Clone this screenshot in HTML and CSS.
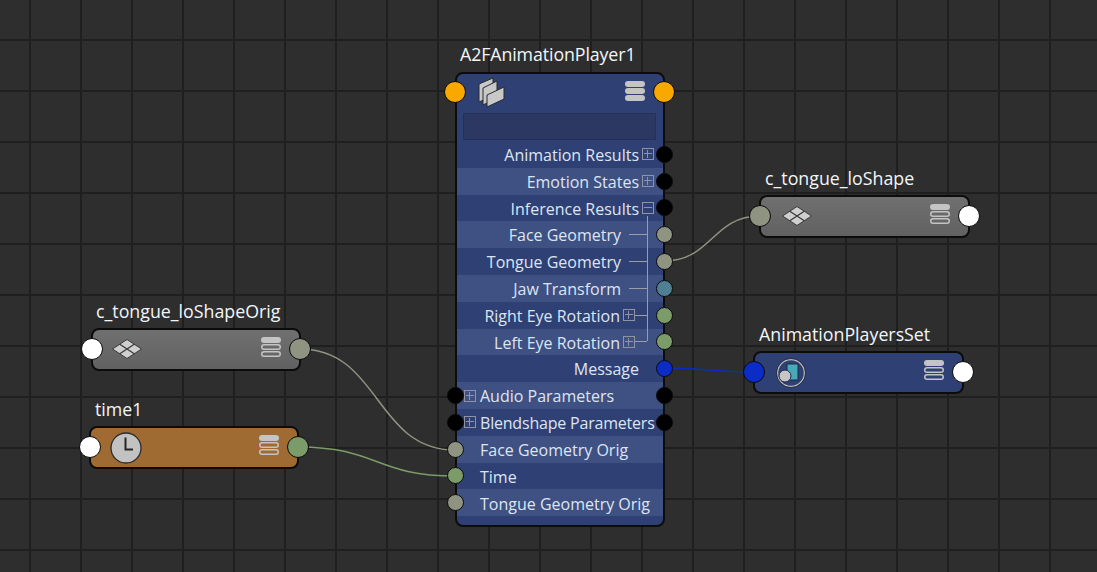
FILE: index.html
```html
<!DOCTYPE html>
<html lang="en">
<head>
<meta charset="utf-8">
<title>Node Editor</title>
<link rel="stylesheet" href="styles.css">
</head>
<body>
<svg class="defs" width="0" height="0" aria-hidden="true">
  <symbol id="stack-open" viewBox="0 0 20 20">
    <rect x="0" y="0" width="20" height="6" rx="3" fill="#c4c4c4"/>
    <rect x="0.75" y="7.75" width="18.5" height="4.5" rx="2.25" fill="none" stroke="#c4c4c4" stroke-width="1.5"/>
    <rect x="0.75" y="14.75" width="18.5" height="4.5" rx="2.25" fill="none" stroke="#c4c4c4" stroke-width="1.5"/>
  </symbol>
  <symbol id="stack-full" viewBox="0 0 20 20">
    <rect x="0" y="0" width="20" height="6" rx="3" fill="#c4c4c4"/>
    <rect x="0" y="7" width="20" height="6" rx="3" fill="#c4c4c4"/>
    <rect x="0" y="14" width="20" height="6" rx="3" fill="#c4c4c4"/>
  </symbol>
  <symbol id="mesh" viewBox="0 0 30 20">
    <path d="M15 0.500 29.500 10 15 19.500 0.500 10Z" fill="#cfcfcf" stroke="#3a3a3a" stroke-width="1"/>
    <path d="M7.750 5.250 22.250 14.750M22.250 5.250 7.750 14.750" fill="none" stroke="#3a3a3a" stroke-width="1.300"/>
  </symbol>
</svg>

<main class="canvas">
  <svg class="wires" width="1097" height="572" viewBox="0 0 1097 572" aria-hidden="true">
    <path class="wire wire-gray" d="M664 261C712 261 712 216 760 216"/>
    <path class="wire wire-gray" d="M300 349C380 349 375 450 455 450"/>
    <path class="wire wire-green" d="M298 447C378 447 375 476 455 476"/>
    <path class="wire wire-blue" d="M664 368C710 368 708 372 754 372"/>
  </svg>

  <section class="node node-orig">
    <h2 class="label">c_tongue_loShapeOrig</h2>
    <div class="pill pill-gray">
      <span class="port big white in"></span>
      <svg class="icon-mesh"><use href="#mesh"/></svg>
      <svg class="icon-stack"><use href="#stack-open"/></svg>
      <span class="port big gray out"></span>
    </div>
  </section>

  <section class="node node-time">
    <h2 class="label">time1</h2>
    <div class="pill pill-brown">
      <span class="port big white in"></span>
      <svg class="icon-clock" viewBox="0 0 32 32">
        <circle cx="16" cy="16" r="15" fill="#c2c2c2" stroke="#2b2b2b" stroke-width="1.300"/>
        <path d="M15.500 5.500V17.500H23" fill="none" stroke="#262626" stroke-width="2"/>
      </svg>
      <svg class="icon-stack"><use href="#stack-open"/></svg>
      <span class="port big green out"></span>
    </div>
  </section>

  <section class="node node-shape">
    <h2 class="label">c_tongue_loShape</h2>
    <div class="pill pill-gray">
      <span class="port big gray in"></span>
      <svg class="icon-mesh"><use href="#mesh"/></svg>
      <svg class="icon-stack"><use href="#stack-open"/></svg>
      <span class="port big white out"></span>
    </div>
  </section>

  <section class="node node-set">
    <h2 class="label">AnimationPlayersSet</h2>
    <div class="pill pill-blue">
      <span class="port big blue in"></span>
      <svg class="icon-set" viewBox="0 0 30 30">
        <circle cx="15" cy="15" r="13.500" fill="#2f4074" stroke="#b9b9b9" stroke-width="1.500"/>
        <circle cx="15" cy="15" r="14.500" fill="none" stroke="#1c1c1c" stroke-width="0.700"/>
        <rect x="11" y="6" width="11" height="16" fill="#47aab8" stroke="#1d2a4a" stroke-width="1"/>
        <circle cx="9" cy="18" r="6" fill="#c6c6c6" stroke="#1d2a4a" stroke-width="1"/>
      </svg>
      <svg class="icon-stack"><use href="#stack-open"/></svg>
      <span class="port big white out"></span>
    </div>
  </section>

  <section class="node node-main">
    <h2 class="label">A2FAnimationPlayer1</h2>
    <div class="player">
      <header class="player-head">
        <span class="port big orange in"></span>
        <svg class="icon-folders" viewBox="0 0 28 32">
          <path d="M1 7 15 1V19L1 25Z" fill="#c8c8c8" stroke="#2a2a2a"/>
          <path d="M5 11 19 4V21L5 28Z" fill="#c8c8c8" stroke="#2a2a2a"/>
          <path d="M9 18 26 10V22L9 30Z" fill="#c8c8c8" stroke="#2a2a2a"/>
        </svg>
        <svg class="icon-stack-main"><use href="#stack-full"/></svg>
        <span class="port big orange out"></span>
        <div class="field"></div>
      </header>
      <div class="rows">
        <span class="tree-line"></span>
        <div class="row end"><span>Animation Results</span><i class="box plus"></i><b class="port black out"></b></div>
        <div class="row end alt"><span>Emotion States</span><i class="box plus"></i><b class="port black out"></b></div>
        <div class="row end"><span>Inference Results</span><i class="box minus"></i><b class="port black out"></b></div>
        <div class="row end child alt lift"><span>Face Geometry</span><i class="tick"></i><b class="port gray out"></b></div>
        <div class="row end child lift"><span>Tongue Geometry</span><i class="tick"></i><b class="port gray out"></b></div>
        <div class="row end child alt"><span>Jaw Transform</span><i class="tick"></i><b class="port teal out"></b></div>
        <div class="row end child"><span>Right Eye Rotation</span><i class="box plus"></i><i class="tick short"></i><b class="port green out"></b></div>
        <div class="row end child alt"><span>Left Eye Rotation</span><i class="box plus"></i><i class="tick short"></i><b class="port green out"></b></div>
        <div class="row end plain lift"><span>Message</span><b class="port blue out"></b></div>
        <div class="row start alt lift"><b class="port black in"></b><i class="box plus"></i><span>Audio Parameters</span><b class="port black out"></b></div>
        <div class="row start"><b class="port black in"></b><i class="box plus"></i><span class="tight">Blendshape Parameters</span><b class="port black out"></b></div>
        <div class="row start flat alt"><b class="port gray in"></b><span>Face Geometry Orig</span></div>
        <div class="row start flat"><b class="port green in"></b><span>Time</span></div>
        <div class="row start flat alt"><b class="port gray in"></b><span>Tongue Geometry Orig</span></div>
      </div>
    </div>
  </section>
</main>
</body>
</html>
```
FILE: styles.css
```css
* { box-sizing: border-box; }
html, body { margin: 0; padding: 0; }
body { width: 1097px; height: 572px; overflow: hidden; background: #2e2e2e; }
.defs { position: absolute; }

.canvas {
  position: relative;
  width: 1097px;
  height: 572px;
  overflow: hidden;
  font-family: "Open Sans", "Noto Sans", sans-serif;
  background-color: #2e2e2e;
  background-image:
    linear-gradient(90deg, #1f1f1f 2px, transparent 2px),
    linear-gradient(#1f1f1f 2px, transparent 2px);
  background-size: 51px 51px, 51px 51px;
  background-position: 29px 0, 0 39px;
}

.wires { position: absolute; left: 0; top: 0; }
.wire { fill: none; stroke-width: 1.500; }
.wire-gray { stroke: #8f9382; }
.wire-green { stroke: #7b9c68; }
.wire-blue { stroke: #0c2cc0; }

.node { position: absolute; }
.node-main { left: 455px; top: 41px; width: 210px; }
.node-orig { left: 91px; top: 297px; width: 210px; }
.node-time { left: 89px; top: 395px; width: 210px; }
.node-shape { left: 759px; top: 164px; width: 211px; }
.node-set { left: 753px; top: 320px; width: 211px; }

.label {
  margin: 0 0 0 5px;
  height: 31px;
  font-size: 17.800px;
  font-weight: 400;
  line-height: 29px;
  color: #f2f6fa;
  white-space: nowrap;
}
.node-main .label { line-height: 27px; letter-spacing: -0.100px; }
.node-time .label,
.node-shape .label,
.node-set .label { margin-left: 6px; }

.pill {
  position: relative;
  display: flex;
  align-items: center;
  justify-content: space-between;
  height: 43px;
  padding: 0 18px 0 21px;
  border: 2px solid #0c0c0c;
  border-radius: 8px;
}
.pill-gray { background: linear-gradient(#707070, #616161); }
.pill-brown { background: #a06b33; padding-left: 19px; }
.pill-blue { background: #2f4074; padding-left: 21px; }
.node-orig .pill { padding-left: 19px; }

.icon-mesh { width: 30px; height: 20px; margin-bottom: 2px; }
.icon-stack { width: 20px; height: 20px; margin-bottom: 6px; }
.icon-clock { width: 32px; height: 32px; }
.icon-set { width: 30px; height: 30px; }

.port {
  position: absolute;
  top: 50%;
  display: block;
  width: 17px;
  height: 17px;
  margin-top: -8.500px;
  border: 1.500px solid #0a0a0a;
  border-radius: 50%;
}
.port.big { width: 22px; height: 22px; margin-top: -12px; }
.pill .port.in { left: -12.500px; }
.pill .port.out { right: -12px; }
.white { background: #ffffff; }
.gray { background: #8f9382; }
.green { background: #7b9c68; }
.teal { background: #4f7f93; }
.blue { background: #0c2cc8; }
.orange { background: #f9a800; }
.black { background: #000000; }

.player {
  height: 455px;
  background: #2f4074;
  border: 2px solid #0c0c0c;
  border-radius: 8px;
}
.player-head { position: relative; height: 67px; }
.player-head .port { top: 19px; }
.player-head .port.in { left: -13px; }
.player-head .port.out { right: -12px; }
.icon-folders { position: absolute; left: 21px; top: 3px; width: 28px; height: 32px; }
.icon-stack-main { position: absolute; left: 168px; top: 7px; width: 20px; height: 20px; }
.field {
  position: absolute;
  left: 6px;
  top: 39px;
  width: 193px;
  height: 27px;
  background: #2d3862;
  border: 1px solid #26315a;
}

.rows { position: relative; }
.tree-line {
  position: absolute;
  z-index: 1;
  left: 190px;
  top: 75px;
  width: 1px;
  height: 125px;
  background: #9a9da6;
}
.row {
  position: relative;
  display: flex;
  align-items: center;
  height: 26.800px;
  font-size: 16px;
  line-height: 20px;
  color: #dde5f3;
  white-space: nowrap;
}
.row span { padding-top: 2px; }
.row.lift span { padding-top: 0; }
.tight { letter-spacing: -0.200px; }
.row.alt { background: #3f5082; }
.row.end { justify-content: flex-end; padding-right: 9px; }
.row.plain { padding-right: 24px; }
.row.child { padding-right: 16px; }
.row.start { padding-left: 7px; }
.row.flat { padding-left: 23px; }
.row .port.out { right: -9.500px; }
.row .port.in { left: -10.500px; }

.box {
  position: relative;
  display: block;
  flex: none;
  width: 12px;
  height: 12px;
  margin-left: 3px;
  border: 1px solid #8f93a3;
}
.box::before {
  content: "";
  position: absolute;
  left: 1px;
  right: 1px;
  top: 4px;
  height: 1px;
  background: #8f93a3;
}
.box.plus::after {
  content: "";
  position: absolute;
  top: 1px;
  bottom: 1px;
  left: 4px;
  width: 1px;
  background: #8f93a3;
}
.row.start .box { margin: 0 4px 0 0; }
.tick {
  display: block;
  flex: none;
  width: 18px;
  height: 1px;
  margin-left: 8px;
  background: #9a9da6;
}
.tick.short { width: 12px; margin-left: 0; }
```
